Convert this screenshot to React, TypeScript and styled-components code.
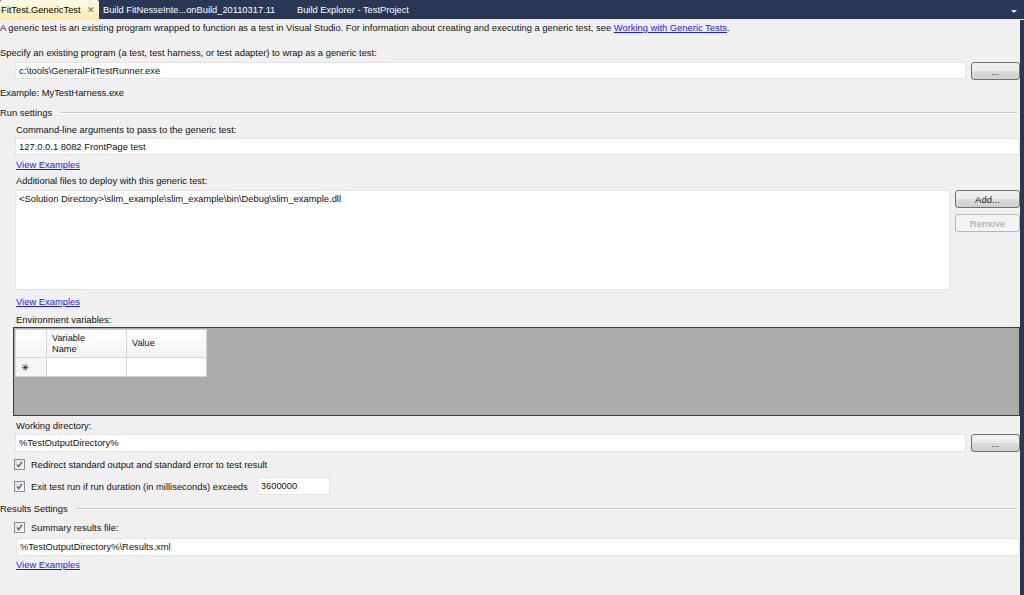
import React from "react";
import styled, { createGlobalStyle } from "styled-components";

const FONT = `"Liberation Sans", Arial, sans-serif`;

const GlobalStyle = createGlobalStyle`
  html, body {
    margin: 0;
    padding: 0;
    background: #293955;
  }
  body {
    font-family: ${FONT};
    font-size: 9.4px;
    color: #111;
  }
`;

const Frame = styled.div`
  width: 1024px;
  height: 595px;
  display: flex;
  flex-direction: column;
  overflow: hidden;
  background: #293955;
`;

const TabBar = styled.div`
  height: 19px;
  display: flex;
  align-items: stretch;
  flex-shrink: 0;
`;

const Tab = styled.div<{ $active?: boolean; $width: number }>`
  width: ${(p) => p.$width}px;
  display: flex;
  align-items: center;
  justify-content: space-between;
  padding: 0 4px 0 ${(p) => (p.$active ? 1 : 4)}px;
  box-sizing: border-box;
  font-size: 9.3px;
  color: ${(p) => (p.$active ? "#000" : "#fff")};
  background: ${(p) =>
    p.$active ? "linear-gradient(#fffbea, #ffeaa8)" : "transparent"};
  border-radius: ${(p) => (p.$active ? "2px 2px 0 0" : "0")};
  white-space: nowrap;
`;

const CloseGlyph = styled.span`
  font-size: 9px;
  color: #666;
`;

const TabMenu = styled.div`
  margin-left: auto;
  width: 20px;
  display: flex;
  align-items: center;
  justify-content: center;
  padding-top: 5px;
`;

const Body = styled.div`
  flex: 1;
  display: flex;
  border-top: 1px solid #ffe8a6;
`;

const Content = styled.div`
  width: 1020px;
  background: #f0f0f0;
  display: flex;
  flex-direction: column;
  padding-top: 1px;
  box-sizing: border-box;
`;

const Text = styled.div<{ $indent?: boolean; $mt?: number }>`
  line-height: 14px;
  height: 14px;
  padding-left: ${(p) => (p.$indent ? 16 : 0)}px;
  margin-top: ${(p) => p.$mt ?? 0}px;
  white-space: nowrap;
`;

const Link = styled.a`
  color: #1a1aff;
  text-decoration: underline;
  cursor: pointer;
`;

const Section = styled.div<{ $mt: number }>`
  display: flex;
  align-items: center;
  gap: 8px;
  line-height: 14px;
  margin-top: ${(p) => p.$mt}px;
  &::after {
    content: "";
    flex: 1;
    height: 0;
    border-top: 1px solid #c8c8c8;
    border-bottom: 1px solid #fff;
    margin-right: 3px;
  }
`;

const FieldRow = styled.div<{ $mt: number; $left?: number }>`
  display: flex;
  align-items: flex-start;
  gap: 5px;
  padding-left: ${(p) => p.$left ?? 15}px;
  margin-top: ${(p) => p.$mt}px;
`;

const Field = styled.div<{ $h?: number }>`
  flex: 1;
  height: ${(p) => p.$h ?? 17}px;
  background: #fff;
  border: 1px solid #e4e4e4;
  box-sizing: border-box;
  padding: 0 3px;
  line-height: 15px;
  white-space: nowrap;
`;

const ButtonColumn = styled.div`
  display: flex;
  flex-direction: column;
  gap: 6px;
`;

const Button = styled.div<{ $w: number; $disabled?: boolean }>`
  width: ${(p) => p.$w}px;
  height: 18px;
  box-sizing: border-box;
  border: 1px solid ${(p) => (p.$disabled ? "#b5b8bb" : "#707070")};
  border-radius: 3px;
  background: ${(p) =>
    p.$disabled
      ? "#f4f4f4"
      : "linear-gradient(#f2f2f2 0%, #ebebeb 50%, #dcdcdc 51%, #cfcfcf 100%)"};
  color: ${(p) => (p.$disabled ? "#a0a0a0" : "#1e1e1e")};
  display: flex;
  align-items: center;
  justify-content: center;
  font-size: 9.5px;
`;

const Grid = styled.div`
  margin: 0 0 0 13px;
  height: 89px;
  box-sizing: border-box;
  border: 1px solid #3c3c3c;
  background: #ababab;
  padding: 1px;
`;

const Table = styled.table`
  border-collapse: collapse;
  font-size: 9.2px;
  td {
    padding: 0 0 0 5px;
    border: 1px solid #d5d5d5;
    box-sizing: border-box;
  }
`;

const HeaderCell = styled.td<{ $w: number }>`
  width: ${(p) => p.$w}px;
  height: 28px;
  background: linear-gradient(#ffffff, #f3f3f3);
  line-height: 11px;
  vertical-align: middle;
`;

const RowHeader = styled.td`
  width: 31px;
  height: 19px;
  background: #f6f6f6;
  font-size: 10px;
`;

const DataCell = styled.td`
  height: 19px;
  background: #fff;
`;

const CheckRow = styled.label<{ $mt: number }>`
  display: flex;
  align-items: center;
  gap: 6px;
  padding-left: 14px;
  margin-top: ${(p) => p.$mt}px;
  height: 14px;
  white-space: nowrap;
`;

const SmallField = styled.div`
  width: 73px;
  height: 18px;
  margin-left: 3px;
  background: #fff;
  border: 1px solid #e4e4e4;
  box-sizing: border-box;
  line-height: 16px;
  padding-left: 3px;
`;

const RightEdge = styled.div`
  flex: 1;
  background: #293955;
`;

const CheckBox: React.FC = () => (
  <svg width="11" height="11" viewBox="0 0 11 11">
    <defs>
      <linearGradient id="cbg" x1="0" y1="0" x2="1" y2="1">
        <stop offset="0" stopColor="#dcdcdc" />
        <stop offset="1" stopColor="#fbfbfb" />
      </linearGradient>
    </defs>
    <rect x="0.5" y="0.5" width="10" height="10" fill="url(#cbg)" stroke="#8e8f8f" />
    <path d="M3 5.5 L4.7 7.6 L8 2.8" fill="none" stroke="#4a5f97" strokeWidth="1.4" />
  </svg>
);

const App: React.FC = () => {
  return (
    <>
      <GlobalStyle />
      <Frame>
        <TabBar>
          <Tab $active $width={99}>
            FitTest.GenericTest
            <CloseGlyph>✕</CloseGlyph>
          </Tab>
          <Tab $width={194}>Build FitNesseInte...onBuild_20110317.11</Tab>
          <Tab $width={160}>Build Explorer - TestProject</Tab>
          <TabMenu>
            <svg width="8" height="6" viewBox="0 0 8 6">
              <path d="M1 1 L7 1 L4 4 Z" fill="#e6e9ef" />
            </svg>
          </TabMenu>
        </TabBar>
        <Body>
          <Content>
            <Text>
              A generic test is an existing program wrapped to function as a test in Visual Studio. For
              information about creating and executing a generic test, see{" "}
              <Link>Working with Generic Tests</Link>.
            </Text>
            <Text $mt={11}>
              Specify an existing program (a test, test harness, or test adapter) to wrap as a generic test:
            </Text>
            <FieldRow $mt={2}>
              <Field>c:\tools\GeneralFitTestRunner.exe</Field>
              <Button $w={49}>...</Button>
            </FieldRow>
            <Text $mt={6}>Example: MyTestHarness.exe</Text>
            <Section $mt={6}>Run settings</Section>
            <Text $indent $mt={3}>
              Command-line arguments to pass to the generic test:
            </Text>
            <FieldRow $mt={1}>
              <Field>127.0.0.1 8082 FrontPage test</Field>
            </FieldRow>
            <Text $indent $mt={3}>
              <Link>View Examples</Link>
            </Text>
            <Text $indent $mt={2}>
              Additional files to deploy with this generic test:
            </Text>
            <FieldRow $mt={2}>
              <Field $h={100}>
                &lt;Solution Directory&gt;\slim_example\slim_example\bin\Debug\slim_example.dll
              </Field>
              <ButtonColumn>
                <Button $w={65}>Add...</Button>
                <Button $w={65} $disabled>
                  Remove
                </Button>
              </ButtonColumn>
            </FieldRow>
            <Text $indent $mt={5}>
              <Link>View Examples</Link>
            </Text>
            <Text $indent $mt={4}>
              Environment variables:
            </Text>
            <Grid>
              <Table>
                <tbody>
                  <tr>
                    <HeaderCell $w={31} />
                    <HeaderCell $w={80}>
                      Variable
                      <br />
                      Name
                    </HeaderCell>
                    <HeaderCell $w={80}>Value</HeaderCell>
                  </tr>
                  <tr>
                    <RowHeader>✳</RowHeader>
                    <DataCell />
                    <DataCell />
                  </tr>
                </tbody>
              </Table>
            </Grid>
            <Text $indent $mt={3}>
              Working directory:
            </Text>
            <FieldRow $mt={1}>
              <Field $h={18}>%TestOutputDirectory%</Field>
              <Button $w={49}>...</Button>
            </FieldRow>
            <CheckRow $mt={5}>
              <CheckBox />
              Redirect standard output and standard error to test result
            </CheckRow>
            <CheckRow $mt={8}>
              <CheckBox />
              Exit test run if run duration (in milliseconds) exceeds
              <SmallField>3600000</SmallField>
            </CheckRow>
            <Section $mt={9}>Results Settings</Section>
            <CheckRow $mt={4}>
              <CheckBox />
              Summary results file:
            </CheckRow>
            <FieldRow $mt={4} $left={16}>
              <Field $h={18}>%TestOutputDirectory%\Results.xml</Field>
            </FieldRow>
            <Text $indent $mt={2}>
              <Link>View Examples</Link>
            </Text>
          </Content>
          <RightEdge />
        </Body>
      </Frame>
    </>
  );
};

export default App;
